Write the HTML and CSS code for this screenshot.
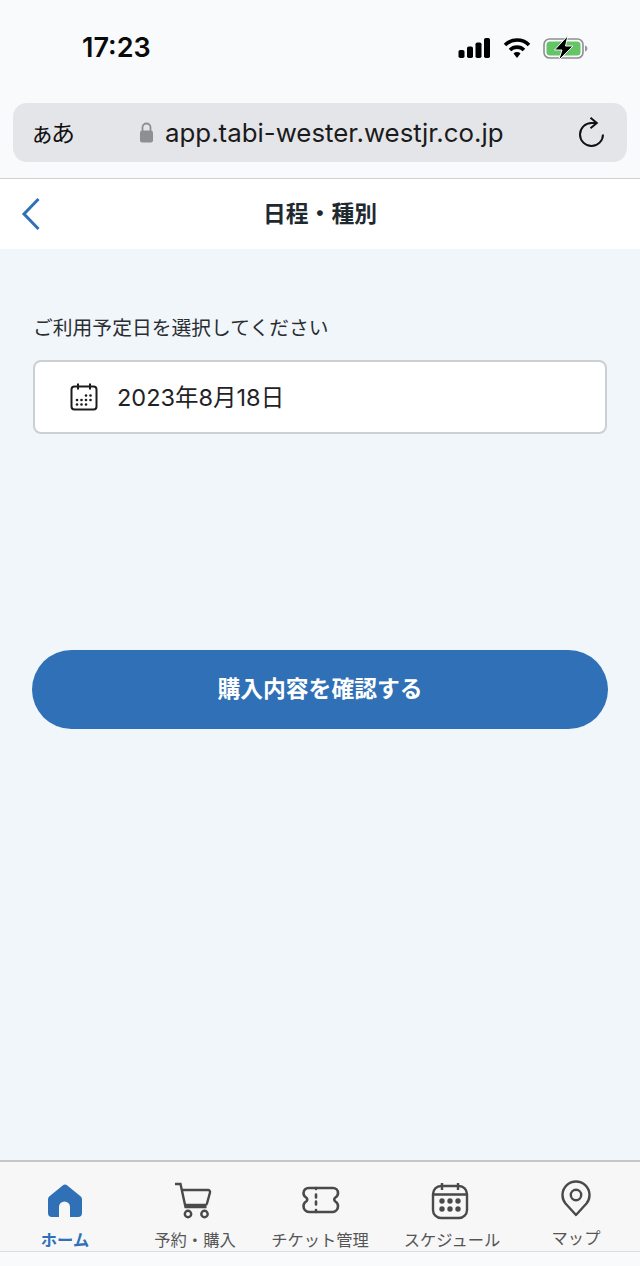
FILE: index.html
```html
<!DOCTYPE html>
<html lang="ja">
<head>
    <meta charset="UTF-8">
    <meta name="viewport" content="width=device-width, initial-scale=1.0">
    <title>日程・種別</title>
    <link rel="stylesheet" href="styles.css">
</head>
<body>

    <div class="browser">
        <div class="status">
            <span class="time">17:23</span>
            <div class="status-icons">
                <svg width="33" height="22" viewBox="0 0 33 22"><g fill="#000"><rect x="0.500" y="13" width="6" height="8" rx="1.800"/><rect x="9" y="9.500" width="6" height="11.500" rx="1.800"/><rect x="17.500" y="5.500" width="6" height="15.500" rx="1.800"/><rect x="26" y="1" width="6" height="20" rx="1.800"/></g></svg>
                <svg width="28" height="22" viewBox="0 0 28 22"><g fill="none" stroke="#000" stroke-width="3.600"><path d="M2 8a17 17 0 0 1 24 0"/><path d="M7 13a10 10 0 0 1 14 0"/></g><path d="M10.500 16.500a5 5 0 0 1 7 0L14 21z" fill="#000"/></svg>
                <svg width="46" height="26" viewBox="0 0 46 26"><rect x="1" y="4" width="39" height="19" rx="5.500" fill="none" stroke="#8f8f92" stroke-width="1.600"/><rect x="3.500" y="6.500" width="34" height="14" rx="3.500" fill="#65c466"/><path d="M42 10.500c1.800.5 2.400 1.600 2.400 3s-.6 2.500-2.400 3z" fill="#9a9a9d"/><path d="M25 .5 11.500 15h7.500l-3.500 10.500L30 11h-7.500z" fill="#000" stroke="#f9fafc" stroke-width="1"/></svg>
            </div>
        </div>
        <div class="urlbar">
            <span class="aa">ぁあ</span>
            <div class="address">
                <svg width="15" height="21" viewBox="0 0 15 21"><path d="M3.500 9V5.500a4 4 0 0 1 8 0V9" fill="none" stroke="#8e8e93" stroke-width="1.800"/><rect x="1" y="8.500" width="13" height="12" rx="2.200" fill="#8e8e93"/></svg>
                <span>app.tabi-wester.westjr.co.jp</span>
            </div>
            <svg class="reload" width="26" height="32" viewBox="0 0 26 32"><path d="M17 6H12.500A11.500 11.500 0 1 0 24 17.500" fill="none" stroke="#111" stroke-width="2"/><path d="M11.500 .8 17.800 6l-6.300 5.200" fill="none" stroke="#111" stroke-width="2"/></svg>
        </div>
    </div>

    <header class="page-head">
        <svg class="back" width="20" height="34" viewBox="0 0 20 34"><path d="M17.500 2 3 17l14.500 15" fill="none" stroke="#2f70b7" stroke-width="3"/></svg>
        <h1>日程・種別</h1>
    </header>

    <main class="content">
        <label class="date-label">ご利用予定日を選択してください</label>
        <div class="date-box">
            <svg width="28" height="28" viewBox="0 0 28 28">
                <rect x="1.500" y="3.500" width="25" height="23" rx="3" fill="none" stroke="#1c1c1c" stroke-width="2"/>
                <path d="M8 .5v6M20 .5v6" stroke="#1c1c1c" stroke-width="2"/>
                <g fill="#1c1c1c"><circle cx="16" cy="12.500" r="1.300"/><circle cx="20.500" cy="12.500" r="1.300"/><circle cx="7" cy="17" r="1.300"/><circle cx="11.500" cy="17" r="1.300"/><circle cx="16" cy="17" r="1.300"/><circle cx="20.500" cy="17" r="1.300"/><circle cx="7" cy="21.500" r="1.300"/><circle cx="11.500" cy="21.500" r="1.300"/><circle cx="16" cy="21.500" r="1.300"/></g>
            </svg>
            <span>2023年8月18日</span>
        </div>
        <button type="button" class="btn">購入内容を確認する</button>
    </main>

    <nav class="tabbar">
        <a class="tab active">
            <svg width="38" height="38" viewBox="0 0 38 38"><path d="M19 2.500a3 3 0 0 1 2 .8l13.500 11a4 4 0 0 1 1.500 3V31a4 4 0 0 1-4 4h-8V25a5.500 5.500 0 0 0-11 0v10H6a4 4 0 0 1-4-4V17.300a4 4 0 0 1 1.500-3L17 3.300a3 3 0 0 1 2-.8z" fill="#2f70b7"/></svg>
            <span>ホーム</span>
        </a>
        <a class="tab">
            <svg class="nudge-left" width="38" height="38" viewBox="0 0 38 38"><g fill="none" stroke="#4a4a4a" stroke-width="2.400"><path d="M1 2h5.500l5 23h21"/><path d="M8 8h26a2 2 0 0 1 2 2.500l-3 11a2 2 0 0 1-2 1.500H11"/><circle cx="14" cy="32" r="3.200"/><circle cx="30.500" cy="32" r="3.200"/></g></svg>
            <span>予約・購入</span>
        </a>
        <a class="tab">
            <svg class="nudge-right" width="40" height="38" viewBox="0 0 40 38"><g fill="none" stroke="#4a4a4a" stroke-width="2.600" stroke-linejoin="round"><path d="M8 6h24a5 5 0 0 1 5 5c0 2-1 3.500-2.600 4.500-1.500 1-1.500 3 0 4 1.600 1 2.600 2.500 2.600 4.500a6 6 0 0 1-5 6H8a6 6 0 0 1-5.500-6c0-2 1-3.500 2.600-4.500 1.500-1 1.500-3 0-4C3.500 14.500 2.500 13 2.500 11A5 5 0 0 1 8 6z"/><path d="M15 6v1M15 12.500v3M15 19.500v3M15 28v2" stroke-linecap="round"/></g></svg>
            <span>チケット管理</span>
        </a>
        <a class="tab">
            <svg class="nudge-left" width="38" height="38" viewBox="0 0 38 38"><g fill="none" stroke="#4a4a4a" stroke-width="2.400"><rect x="2" y="4" width="34" height="32" rx="8"/><path d="M2 12.500h34M11 1v7M27 1v7"/></g><g fill="#4a4a4a"><circle cx="11" cy="19" r="2.700"/><circle cx="19" cy="19" r="2.700"/><circle cx="27" cy="19" r="2.700"/><circle cx="11" cy="27" r="2.700"/><circle cx="19" cy="27" r="2.700"/><circle cx="27" cy="27" r="2.700"/></g></svg>
            <span>スケジュール</span>
        </a>
        <a class="tab map">
            <svg width="30" height="36" viewBox="0 0 30 36"><g fill="none" stroke="#4a4a4a" stroke-width="2.400"><path d="M15 34 4.500 22.500A13.500 13.500 0 1 1 25.500 22.500z" stroke-linejoin="round"/><circle cx="15" cy="14" r="5.200"/></g></svg>
            <span>マップ</span>
        </a>
    </nav>
    <div class="home-strip"></div>

</body>
</html>
```

FILE: styles.css
```css
body {
    font-family: "Inter", "Noto Sans CJK JP", sans-serif;
    background: #f1f6fa;
    margin: 0;
    height: 1266px;
    display: flex;
    flex-direction: column;
    color: #1f2327;
    overflow: hidden;
}
.browser {
    background: #f9fafc;
    height: 178px;
    padding: 0 13px;
    box-sizing: border-box;
}
.status {
    height: 103px;
    display: flex;
    justify-content: space-between;
    align-items: flex-start;
    padding: 32px 38px 0 69px;
    box-sizing: border-box;
}
.time {
    font-size: 27px;
    font-weight: 600;
    line-height: 32px;
    color: #0a0a0a;
}
.status-icons {
    display: flex;
    align-items: center;
    gap: 12px;
    margin: 3px 0 0 0;
}
.urlbar {
    height: 59px;
    background: #e4e5e8;
    border-radius: 14px;
    display: flex;
    align-items: center;
    padding: 0 22px 0 17px;
    position: relative;
}
.aa {
    font-size: 24px;
    letter-spacing: -3px;
    color: #111;
    width: 66px;
    padding-bottom: 3px;
}
.address {
    display: flex;
    align-items: center;
    gap: 11px;
    margin-left: 43px;
    font-family: "Inter", sans-serif;
    font-size: 25.850px;
    color: #1b1b1b;
    white-space: nowrap;
    flex: 1;
}
.page-head {
    height: 71px;
    box-sizing: border-box;
    background: white;
    border-top: 1px solid #cfd0d3;
    display: flex;
    align-items: center;
    justify-content: center;
    position: relative;
    padding-bottom: 4px;
}
.page-head h1 {
    font-size: 22.800px;
    font-weight: 700;
    margin: 0;
    color: #1f2a30;
}
.back {
    position: absolute;
    left: 21px;
    top: 18px;
}
.content {
    flex: 1;
    padding: 66px 33px 0;
    display: flex;
    flex-direction: column;
}
.date-label {
    font-size: 19.800px;
    line-height: 27px;
    color: #2a2e32;
}
.date-box {
    margin-top: 18px;
    height: 74px;
    box-sizing: border-box;
    background: white;
    border: 2px solid #cdd0d3;
    border-radius: 8px;
    display: flex;
    align-items: center;
    gap: 19px;
    padding-left: 35px;
    padding-bottom: 3px;
    font-size: 23.500px;
    color: #1f2327;
}
.date-box svg {
    margin-top: 3px;
}
.btn {
    margin: 216px -1px 0;
    height: 79px;
    padding-bottom: 5px;
    background: #2f70b7;
    color: white;
    border: none;
    border-radius: 40px;
    font-family: inherit;
    font-size: 22.800px;
    font-weight: 700;
}
.tabbar {
    height: 92px;
    box-sizing: border-box;
    background: #f7f7f8;
    border-top: 2px solid #c4c6c9;
    border-bottom: 1px solid #dcdde0;
    display: grid;
    grid-template-columns: 130px 130px 120px 144px 104px;
}
.tab {
    display: flex;
    flex-direction: column;
    align-items: center;
    padding-top: 20px;
    gap: 8px;
    font-size: 16.300px;
    color: #555;
    white-space: nowrap;
}
.tab svg {
    height: 38px;
}
.tab svg.nudge-left {
    margin-right: 4px;
}
.tab svg.nudge-right {
    margin-left: 2px;
}
.tab span {
    line-height: 24px;
}
.tab.active {
    color: #2f70b7;
    font-weight: 700;
}
.tab.map {
    padding-top: 18px;
}
.home-strip {
    height: 14px;
    background: #f9fafc;
}
```
